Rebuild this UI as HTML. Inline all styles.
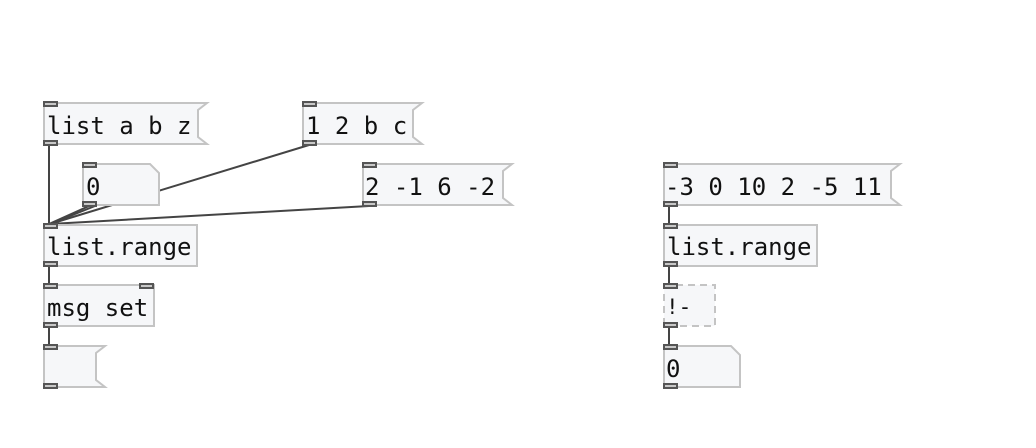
<!DOCTYPE html>
<html><head><meta charset="utf-8"><style>
html,body{margin:0;padding:0;background:#fff;width:1036px;height:448px;overflow:hidden}
text{font-family:"DejaVu Sans Mono","Liberation Mono",monospace;font-size:24px;fill:#111}
.b{fill:#f6f7f9;stroke:#c4c4c4;stroke-width:2}
.io{fill:#c8c8c8;stroke:#555;stroke-width:2}
.c{stroke:#444;stroke-width:2;fill:none}
</style></head><body>
<svg width="1036" height="448" viewBox="0 0 1036 448" xmlns="http://www.w3.org/2000/svg">
<line class="c" x1="49" y1="145" x2="49" y2="224"/>
<line class="c" x1="89" y1="206" x2="49" y2="224"/>
<line class="c" x1="95" y1="206" x2="50" y2="224"/>
<line class="c" x1="309" y1="145" x2="50" y2="224"/>
<line class="c" x1="369" y1="206" x2="50" y2="224"/>
<line class="c" x1="49" y1="266" x2="49" y2="284"/>
<line class="c" x1="49" y1="327" x2="49" y2="345"/>
<line class="c" x1="669" y1="206" x2="669" y2="224"/>
<line class="c" x1="669" y1="266" x2="669" y2="284"/>
<line class="c" x1="669" y1="327" x2="669" y2="345"/>

<path class="b" d="M44 103 H207 L198 110 V137 L207 144 H44 Z"/>
<text x="47" y="134">list a b z</text>
<rect class="io" x="44" y="102" width="13" height="4"/><rect class="io" x="44" y="141" width="13" height="4"/>

<path class="b" d="M303 103 H422 L413 110 V137 L422 144 H303 Z"/>
<text x="306" y="134">1 2 b c</text>
<rect class="io" x="303" y="102" width="13" height="4"/><rect class="io" x="303" y="141" width="13" height="4"/>

<path class="b" d="M83 164 H150 L159 173 V205 H83 Z"/>
<text x="86" y="195">0</text>
<rect class="io" x="83" y="163" width="13" height="4"/><rect class="io" x="83" y="202" width="13" height="4"/>

<path class="b" d="M363 164 H512 L503 171 V198 L512 205 H363 Z"/>
<text x="365" y="195">2 -1 6 -2</text>
<rect class="io" x="363" y="163" width="13" height="4"/><rect class="io" x="363" y="202" width="13" height="4"/>

<rect class="b" x="44" y="225" width="153" height="41"/>
<text x="47" y="255">list.range</text>
<rect class="io" x="44" y="224" width="13" height="4"/><rect class="io" x="44" y="262" width="13" height="4"/>

<rect class="b" x="44" y="285" width="110" height="41"/>
<text x="47" y="316">msg set</text>
<rect class="io" x="44" y="284" width="13" height="4"/><rect class="io" x="140" y="284" width="13" height="4"/><rect class="io" x="44" y="323" width="13" height="4"/>

<path class="b" d="M44 346 H105 L96 353 V380 L105 387 H44 Z"/>
<rect class="io" x="44" y="345" width="13" height="4"/><rect class="io" x="44" y="384" width="13" height="4"/>

<path class="b" d="M664 164 H900 L891 171 V198 L900 205 H664 Z"/>
<text x="665" y="195">-3 0 10 2 -5 11</text>
<rect class="io" x="664" y="163" width="13" height="4"/><rect class="io" x="664" y="202" width="13" height="4"/>

<rect class="b" x="664" y="225" width="153" height="41"/>
<text x="667" y="255">list.range</text>
<rect class="io" x="664" y="224" width="13" height="4"/><rect class="io" x="664" y="262" width="13" height="4"/>

<rect x="664" y="285" width="51" height="41" fill="#f6f7f9" stroke="#c4c4c4" stroke-width="2" stroke-dasharray="7,5"/>
<text x="666" y="314" style="font-size:21px">!-</text>
<rect class="io" x="664" y="284" width="13" height="4"/><rect class="io" x="664" y="323" width="13" height="4"/>

<path class="b" d="M664 346 H731 L740 355 V387 H664 Z"/>
<text x="666" y="377">0</text>
<rect class="io" x="664" y="345" width="13" height="4"/><rect class="io" x="664" y="384" width="13" height="4"/>
</svg>
</body></html>
